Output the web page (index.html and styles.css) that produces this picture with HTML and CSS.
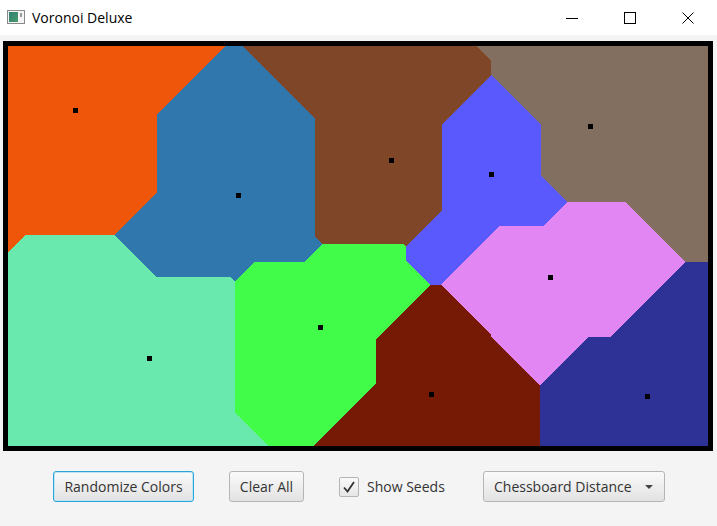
FILE: index.html
```html
<!DOCTYPE html>
<html>
<head>
<meta charset="utf-8">
<title>Voronoi Deluxe</title>
<link rel="stylesheet" href="styles.css">
</head>
<body>
<div class="titlebar">
  <svg class="app-icon" width="18" height="14" viewBox="0 0 18 14">
    <defs>
      <linearGradient id="ig" x1="0" y1="0" x2="1" y2="1">
        <stop offset="0" stop-color="#2f7f73"/>
        <stop offset="1" stop-color="#4a9a6c"/>
      </linearGradient>
    </defs>
    <rect x="0.5" y="0.5" width="17" height="13" fill="#f4f4f4" stroke="#8a8a8a"/>
    <rect x="2" y="2" width="9" height="10" fill="url(#ig)"/>
    <rect x="13" y="3" width="2" height="4" fill="#9a9a9a"/>
  </svg>
  <span class="title">Voronoi Deluxe</span>
  <div class="win-controls">
    <div class="win-btn">
      <svg width="12" height="12" viewBox="0 0 12 12"><line x1="0" y1="6.5" x2="12" y2="6.5" stroke="#000" stroke-width="1"/></svg>
    </div>
    <div class="win-btn">
      <svg width="12" height="12" viewBox="0 0 12 12"><rect x="0.5" y="0.5" width="11" height="11" fill="none" stroke="#000" stroke-width="1"/></svg>
    </div>
    <div class="win-btn">
      <svg width="12" height="12" viewBox="0 0 12 12"><path d="M0.5 0.5 L11.5 11.5 M11.5 0.5 L0.5 11.5" stroke="#000" stroke-width="1"/></svg>
    </div>
  </div>
</div>
<main class="content">
  <div class="board">
    <canvas id="voronoi" width="700" height="400"></canvas>
  </div>
  <div class="toolbar">
    <button class="btn btn-random focused">Randomize Colors</button>
    <button class="btn btn-clear">Clear All</button>
    <label class="check">
      <span class="box">
        <svg width="14" height="14" viewBox="0 0 14 14"><path d="M2 7.5 L5.5 11.5 L12 2" fill="none" stroke="#333" stroke-width="1.8"/></svg>
      </span>
      <span class="check-label">Show Seeds</span>
    </label>
    <div class="combo">
      <span class="combo-text">Chessboard Distance</span>
      <span class="combo-arrow"></span>
    </div>
  </div>
</main>
<script src="script.js"></script>
</body>
</html>
```

FILE: styles.css
```css
* { box-sizing: border-box; }
html, body {
  margin: 0;
  padding: 0;
  width: 717px;
  height: 526px;
  overflow: hidden;
  background: #f4f4f4;
  font-family: "Open Sans", "Noto Sans", "Liberation Sans", sans-serif;
}
.titlebar {
  height: 35px;
  background: #ffffff;
  display: flex;
  align-items: center;
}
.app-icon {
  margin-left: 7px;
  margin-top: -1px;
}
.title {
  margin-left: 7px;
  font-size: 14px;
  color: #000;
  margin-top: -1px;
}
.win-controls {
  margin-left: auto;
  display: flex;
  height: 35px;
}
.win-btn {
  width: 58px;
  height: 35px;
  display: flex;
  align-items: center;
  justify-content: center;
}
.content {
  padding: 6px 0 0 3px;
}
.board {
  width: 710px;
  height: 410px;
  border: 5px solid #000;
  background: #fff;
}
.board canvas {
  display: block;
}
.toolbar {
  margin-top: 20px;
  display: flex;
  align-items: center;
  justify-content: center;
  gap: 35px;
  padding-right: 2px;
}
.btn {
  height: 31px;
  padding: 0;
  font-family: inherit;
  font-size: 14px;
  color: #333;
  border: 1px solid #b5b5b5;
  border-radius: 3px;
  background: linear-gradient(#fafafa, #e2e2e2);
  cursor: default;
  text-align: center;
}
.btn-random { width: 141px; }
.btn-clear { width: 75px; }
.btn.focused {
  border: 1px solid #2ba4d8;
  box-shadow: inset 0 0 0 1px #bfe4f3;
}
.check {
  width: 109px;
  display: flex;
  align-items: center;
  gap: 8px;
  font-size: 14px;
  color: #333;
}
.box {
  width: 20px;
  height: 20px;
  border: 1px solid #b5b5b5;
  border-radius: 2px;
  background: linear-gradient(#f9f9f9, #e6e6e6);
  display: flex;
  align-items: center;
  justify-content: center;
}
.combo {
  width: 182px;
  height: 31px;
  border: 1px solid #b5b5b5;
  border-radius: 3px;
  background: linear-gradient(#fafafa, #e2e2e2);
  display: flex;
  align-items: center;
  padding: 0 0 0 10px;
  font-size: 14px;
  color: #333;
}
.combo-arrow {
  margin-left: auto;
  margin-right: 11px;
  width: 0;
  height: 0;
  border-left: 4px solid transparent;
  border-right: 4px solid transparent;
  border-top: 4px solid #444;
}
```

FILE: script.js
```js
(function () {
  var seeds = [
    [67, 64, [240, 86, 10]],
    [230, 149, [48, 119, 174]],
    [383, 114, [127, 70, 39]],
    [483, 128, [89, 89, 254]],
    [582, 80, [130, 111, 95]],
    [141, 312, [105, 233, 173]],
    [312, 281, [65, 253, 74]],
    [423, 348, [119, 26, 5]],
    [542, 231, [226, 134, 244]],
    [639, 350, [46, 49, 150]]
  ];
  var c = document.getElementById('voronoi');
  var ctx = c.getContext('2d');
  var W = c.width, H = c.height;
  var img = ctx.createImageData(W, H);
  var d = img.data;
  for (var y = 0; y < H; y++) {
    for (var x = 0; x < W; x++) {
      var best = 1e9, bi = 0;
      for (var i = 0; i < seeds.length; i++) {
        var dist = Math.max(Math.abs(x - seeds[i][0]), Math.abs(y - seeds[i][1]));
        if (dist < best) { best = dist; bi = i; }
      }
      var col = seeds[bi][2];
      var o = (y * W + x) * 4;
      d[o] = col[0]; d[o + 1] = col[1]; d[o + 2] = col[2]; d[o + 3] = 255;
    }
  }
  ctx.putImageData(img, 0, 0);
  ctx.fillStyle = '#000';
  for (var j = 0; j < seeds.length; j++) {
    ctx.fillRect(seeds[j][0] - 2, seeds[j][1] - 2, 5, 5);
  }
})();
```
